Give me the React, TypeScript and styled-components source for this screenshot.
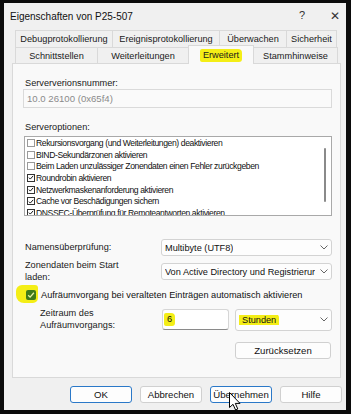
import { createGlobalStyle } from "styled-components";
import styled from "styled-components";

const GlobalStyle = createGlobalStyle`
  * { box-sizing: border-box; }
  html, body {
    margin: 0;
    padding: 0;
    background: #0b0b0b;
    overflow: hidden;
  }
  body {
    font-family: "Liberation Sans", Arial, sans-serif;
    font-size: 9.2px;
    color: #1a1a1a;
  }
`;

const Window = styled.div`
  position: relative;
  margin: 3px 5px 4px 4px;
  width: 342px;
  height: 407px;
  background: #f0f0f0;
  display: flex;
  flex-direction: column;
`;

const TitleBar = styled.div`
  height: 26px;
  display: flex;
  align-items: center;
  justify-content: space-between;
  padding-left: 6px;
`;

const Title = styled.span`
  font-size: 10px;
  color: #111;
`;

const TitleButtons = styled.div`
  display: flex;
  gap: 11px;
`;

const TitleButton = styled.span<{ $size?: number }>`
  width: 22px;
  text-align: center;
  font-size: ${(p) => p.$size ?? 11}px;
  color: #333;
`;

const Tabs = styled.div`
  margin-left: 11px;
  width: 323px;
  margin-top: 1px;
  display: flex;
  flex-direction: column;
`;

const TabRow = styled.div<{ $h: number }>`
  display: flex;
  height: ${(p) => p.$h}px;
`;

const Tab = styled.div<{ $w: number; $selected?: boolean }>`
  width: ${(p) => p.$w}px;
  display: flex;
  align-items: center;
  justify-content: center;
  border: 1px solid #d9d9d9;
  border-bottom: none;
  margin-right: -1px;
  background: ${(p) => (p.$selected ? "#f9f9f9" : "#f0f0f0")};
  position: relative;
  z-index: ${(p) => (p.$selected ? 2 : 1)};
  ${(p) => p.$selected && "margin-top: -2px; height: calc(100% + 3px);"}
  color: #1a1a1a;
  white-space: nowrap;
`;

const Highlight = styled.span`
  background: #f4ee16;
  padding: 1px 3px 2px;
  border-radius: 2px 4px 3px 2px;
`;

const Panel = styled.div`
  margin-left: 8px;
  width: 329px;
  height: 315px;
  background: #f9f9f9;
  border: 1px solid #d9d9d9;
  padding: 13px 8px 0 10px;
  display: flex;
  flex-direction: column;
  position: relative;
  z-index: 1;
`;

const Label = styled.div<{ $mt?: number }>`
  line-height: 12px;
  padding-left: 2px;
  margin-top: ${(p) => p.$mt ?? 0}px;
`;

const ReadOnlyBox = styled.div`
  height: 19px;
  border: 1px solid #dadada;
  background: #fafafa;
  color: #8a8a8a;
  font-size: 9.6px;
  display: flex;
  align-items: center;
  padding-left: 3px;
`;

const ListBox = styled.div`
  margin-top: 3px;
  margin-left: 1px;
  height: 80px;
  border: 1px solid #a9a9a9;
  background: #fff;
  display: flex;
  overflow: hidden;
`;

const ListItems = styled.div`
  flex: 1;
  display: flex;
  flex-direction: column;
  padding-left: 2px;
  font-size: 8.6px;
  letter-spacing: -0.4px;
`;

const ListItem = styled.div`
  height: 11.7px;
  flex: 0 0 11.7px;
  display: flex;
  align-items: center;
  white-space: nowrap;
  color: #111;
`;

const SmallBox = styled.span<{ $checked?: boolean }>`
  width: 8px;
  height: 8px;
  flex: 0 0 8px;
  border: 1px solid ${(p) => (p.$checked ? "#333" : "#9a9a9a")};
  background: #fff;
  margin-right: 1px;
  display: flex;
  align-items: center;
  justify-content: center;
`;

const ScrollTrack = styled.div`
  width: 13px;
  flex: 0 0 13px;
  display: flex;
  justify-content: center;
  padding-top: 11px;
`;

const ScrollThumb = styled.div`
  width: 2px;
  height: 54px;
  border-radius: 1px;
  background: #8a8a8a;
`;

const FieldRow = styled.div<{ $mt: number; $indent?: number; $h: number }>`
  display: flex;
  align-items: center;
  margin-top: ${(p) => p.$mt}px;
  padding-left: ${(p) => 2 + (p.$indent ?? 0)}px;
  min-height: ${(p) => p.$h}px;
`;

const FieldLabel = styled.div<{ $w: number }>`
  width: ${(p) => p.$w}px;
  flex: 0 0 auto;
  line-height: 11.5px;
`;

const Combo = styled.div<{ $h: number }>`
  flex: 1;
  height: ${(p) => p.$h}px;
  border: 1px solid #d3d3d3;
  border-radius: 3px;
  background: #fdfdfd;
  display: flex;
  align-items: center;
  justify-content: space-between;
  padding: 0 3px;
  white-space: nowrap;
  overflow: hidden;
  color: #111;
`;

const ComboText = styled.span`
  overflow: hidden;
`;

const TextBox = styled.div`
  width: 67px;
  height: 21px;
  border: 1px solid #d6d6d6;
  border-bottom-color: #8a8a8a;
  border-radius: 3px;
  background: #fff;
  display: flex;
  align-items: center;
  padding-left: 1px;
  margin-right: 6px;
  color: #111;
`;

const CheckRow = styled.div`
  display: flex;
  align-items: center;
  height: 12px;
  margin-top: 6px;
  padding-left: 3px;
  white-space: nowrap;
  color: #111;
`;

const CheckMarker = styled.span`
  display: inline-flex;
  background: #f4ee16;
  padding: 5px 2px 3px 10px;
  margin: -5px 3px -3px -10px;
  border-radius: 6px 3px 5px 8px;
`;

const AccentBox = styled.span`
  width: 10px;
  height: 10px;
  border-radius: 2px;
  background: #3f7a1c;
  display: flex;
  align-items: center;
  justify-content: center;
`;

const ResetRow = styled.div`
  display: flex;
  justify-content: flex-end;
  margin-top: 11px;
  padding-right: 1px;
`;

const Button = styled.div<{ $w: number; $accent?: boolean }>`
  width: ${(p) => p.$w}px;
  height: 17px;
  border: 1px solid ${(p) => (p.$accent ? "#2a78c8" : "#d0d0d0")};
  border-radius: 3px;
  background: #fdfdfd;
  display: flex;
  align-items: center;
  justify-content: center;
  font-size: 9.6px;
  color: #111;
`;

const ButtonBar = styled.div`
  display: flex;
  justify-content: flex-end;
  gap: 8px;
  margin-top: 8px;
  padding-right: 4px;
`;

const Cursor = styled.svg`
  position: absolute;
  left: 225px;
  top: 389px;
  z-index: 5;
`;

const Chevron = () => (
  <svg width="8" height="5" viewBox="0 0 8 5">
    <polyline points="0.5,0.5 4,4 7.5,0.5" fill="none" stroke="#555" strokeWidth="0.9" />
  </svg>
);

const Tick = ({ color, size }: { color: string; size: number }) => (
  <svg width={size} height={size} viewBox="0 0 8 8">
    <polyline points="1.2,4.2 3.1,6.1 6.9,1.8" fill="none" stroke={color} strokeWidth="1.3" />
  </svg>
);

const tabRow1 = [
  { label: "Debugprotokollierung", w: 98 },
  { label: "Ereignisprotokollierung", w: 108 },
  { label: "Überwachen", w: 68 },
  { label: "Sicherheit", w: 51 },
];

const tabRow2 = [
  { label: "Schnittstellen", w: 83 },
  { label: "Weiterleitungen", w: 92 },
  { label: "Erweitert", w: 66, selected: true },
  { label: "Stammhinweise", w: 85 },
];

const options = [
  { label: "Rekursionsvorgang (und Weiterleitungen) deaktivieren", checked: false },
  { label: "BIND-Sekundärzonen aktivieren", checked: false },
  { label: "Beim Laden unzulässiger Zonendaten einen Fehler zurückgeben", checked: false },
  { label: "Roundrobin aktivieren", checked: true },
  { label: "Netzwerkmaskenanforderung aktivieren", checked: true },
  { label: "Cache vor Beschädigungen sichern", checked: true },
  { label: "DNSSEC-Überprüfung für Remoteantworten aktivieren", checked: true },
];

const App = () => {
  return (
    <>
      <GlobalStyle />
      <Window>
        <TitleBar>
          <Title>Eigenschaften von P25-507</Title>
          <TitleButtons>
            <TitleButton>?</TitleButton>
            <TitleButton $size={12}>✕</TitleButton>
          </TitleButtons>
        </TitleBar>

        <Tabs>
          <TabRow $h={17}>
            {tabRow1.map((t) => (
              <Tab key={t.label} $w={t.w}>
                {t.label}
              </Tab>
            ))}
          </TabRow>
          <TabRow $h={16}>
            {tabRow2.map((t) => (
              <Tab key={t.label} $w={t.w} $selected={t.selected}>
                {t.selected ? <Highlight>{t.label}</Highlight> : t.label}
              </Tab>
            ))}
          </TabRow>
        </Tabs>

        <Panel>
          <Label>Serververionsnummer:</Label>
          <ReadOnlyBox>10.0 26100 (0x65f4)</ReadOnlyBox>
          <Label $mt={13}>Serveroptionen:</Label>
          <ListBox>
            <ListItems>
              {options.map((o) => (
                <ListItem key={o.label}>
                  <SmallBox $checked={o.checked}>
                    {o.checked && <Tick color="#111" size={7} />}
                  </SmallBox>
                  {o.label}
                </ListItem>
              ))}
            </ListItems>
            <ScrollTrack>
              <ScrollThumb />
            </ScrollTrack>
          </ListBox>

          <FieldRow $mt={23} $h={17}>
            <FieldLabel $w={136}>Namensüberprüfung:</FieldLabel>
            <Combo $h={17}>
              <ComboText>Multibyte (UTF8)</ComboText>
              <Chevron />
            </Combo>
          </FieldRow>
          <FieldRow $mt={4} $h={23}>
            <FieldLabel $w={136}>
              Zonendaten beim Start
              <br />
              laden:
            </FieldLabel>
            <Combo $h={17}>
              <ComboText>Von Active Directory und Registrierur</ComboText>
              <Chevron />
            </Combo>
          </FieldRow>

          <CheckRow>
            <CheckMarker>
              <AccentBox>
                <Tick color="#e9f2a6" size={8} />
              </AccentBox>
            </CheckMarker>
            Aufräumvorgang bei veralteten Einträgen automatisch aktivieren
          </CheckRow>

          <FieldRow $mt={7} $indent={15} $h={22}>
            <FieldLabel $w={122}>
              Zeitraum des
              <br />
              Aufräumvorgangs:
            </FieldLabel>
            <TextBox>
              <Highlight>6</Highlight>
            </TextBox>
            <Combo $h={22}>
              <ComboText>
                <Highlight>Stunden</Highlight>
              </ComboText>
              <Chevron />
            </Combo>
          </FieldRow>

          <ResetRow>
            <Button $w={96}>Zurücksetzen</Button>
          </ResetRow>
        </Panel>

        <ButtonBar>
          <Button $w={62} $accent>
            OK
          </Button>
          <Button $w={62}>Abbrechen</Button>
          <Button $w={62} $accent>
            Übernehmen
          </Button>
          <Button $w={62}>Hilfe</Button>
        </ButtonBar>

        <Cursor width="12" height="19" viewBox="0 0 12 19">
          <path
            d="M0.5 0.5 L0.5 15.5 L4 12.3 L6.6 18 L8.8 17 L6.3 11.4 L11 11.4 Z"
            fill="#fff"
            stroke="#000"
            strokeWidth="1"
            strokeLinejoin="round"
          />
        </Cursor>
      </Window>
    </>
  );
};

export default App;
